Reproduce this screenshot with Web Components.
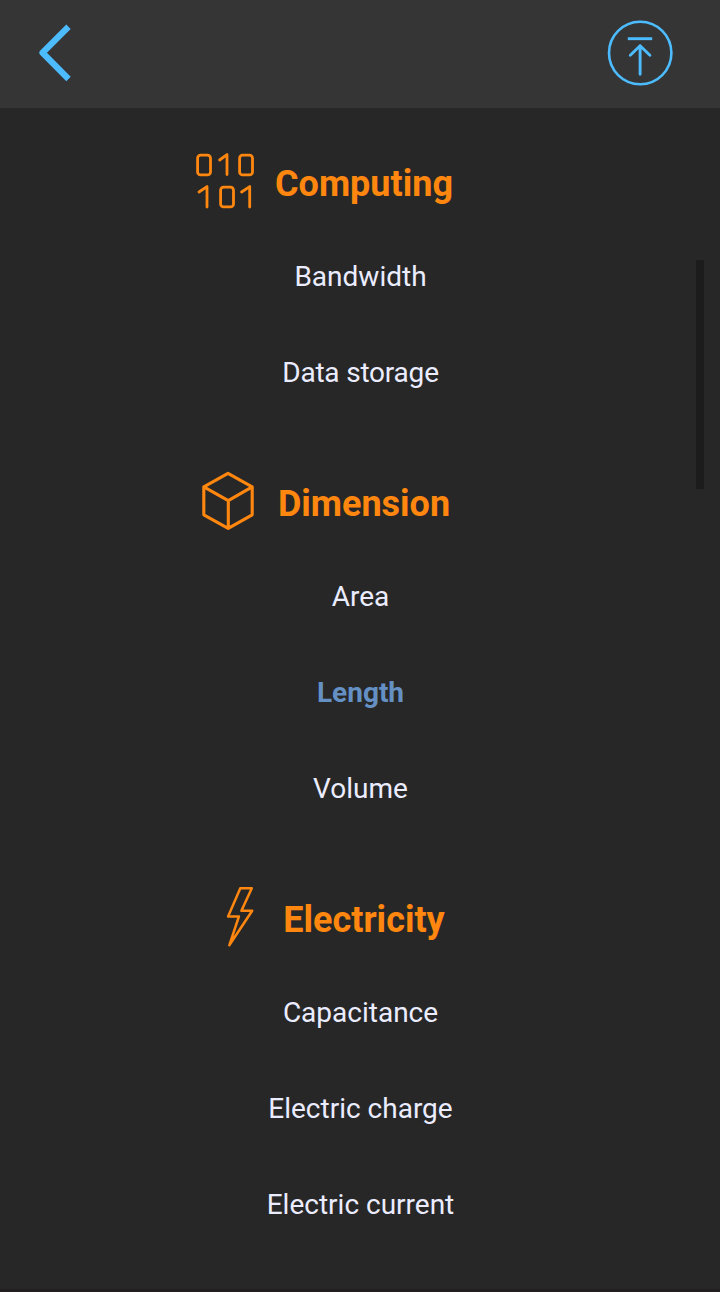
<!DOCTYPE html>
<html lang="en">
<head>
<meta charset="utf-8">
<title>Units</title>
<style>
html,body{margin:0;height:100%;background:#272727;overflow:hidden}
</style>
</head>
<body>
<unit-screen></unit-screen>
<script>
const define = (name, html) => {
  const t = document.createElement('template');
  t.innerHTML = html;
  customElements.define(name, class extends HTMLElement {
    constructor() {
      super();
      this.attachShadow({ mode: 'open' }).append(t.content.cloneNode(true));
    }
  });
};

const icons = {
  binary: '<g stroke-width="2.8"><rect x="5.6" y="7.2" width="12.9" height="19.7" rx="3"/><rect x="47.6" y="7.2" width="12.9" height="19.7" rx="3"/><rect x="28.6" y="39.2" width="12.9" height="19.7" rx="3"/><path d="M27.6 12 35 6.6V26.6M7 44 15 38.6V59M49.6 44 57.7 38.6V59"/></g>',
  cube: '<path stroke-width="3.1" d="M36 5.3 60.2 18.8V46.8L36.2 60.4 11.8 46.8V18.8ZM11.8 18.8 36.3 32.6 60.2 18.8M36.3 32.6V60.4"/>',
  bolt: '<path stroke-width="2.5" d="M48.3 4.2H59.8L49.4 26.8H60.2L37.3 61.3 46.9 32.5H36.1Z"/>'
};
customElements.define('category-icon', class extends HTMLElement {
  connectedCallback() {
    this.attachShadow({ mode: 'open' }).innerHTML =
      '<style>:host{display:block;width:64px;height:64px}svg{display:block}</style>' +
      '<svg width="64" height="64" fill="none" stroke="#ff870f" stroke-linecap="round" stroke-linejoin="round">' +
      icons[this.getAttribute('name')] + '</svg>';
  }
});

define('top-bar', `
<style>
:host{display:flex;justify-content:space-between;box-sizing:border-box;height:108px;flex:none;background:#353535}
svg{display:block}
</style>
<svg width="108" height="108" fill="none" stroke="#4dbcff"><path stroke-width="6.2" stroke-linejoin="round" d="M68.5 26.8 42.5 52.8 68.5 79"/></svg>
<svg width="160" height="108" fill="none" stroke="#4dbcff"><circle cx="80.2" cy="53" r="31.2" stroke-width="2.6"/><path stroke-width="2.9" stroke-linejoin="round" d="M67.8 38.7H92.2"/><path stroke-width="2.9" stroke-linecap="round" stroke-linejoin="round" d="M80.1 74.3V45.8M70.3 55.2 80.1 45.8 89.9 55.2"/></svg>`);

define('unit-item', `
<style>
:host{display:block;box-sizing:border-box;height:96px;padding:1px 0 0 1px;line-height:96px;text-align:center;font-size:28px;color:#ebedff}
:host([selected]){font-weight:700;color:#6590c4}
:host([tight]){letter-spacing:-.2px}
</style><slot></slot>`);

define('unit-category', `
<style>
:host{display:block;padding-top:32px}
header{display:grid;grid-template-columns:64px 216px;justify-content:start;padding-left:192px;height:96px;box-sizing:border-box;padding-top:16px}
h2{margin:0;text-align:center;font-size:36px;line-height:72px;font-weight:700;color:#ff870f}
</style>
<header><slot name="icon"></slot><h2><slot name="title"></slot></h2></header>
<slot></slot>`);

define('scroll-thumb', `
<style>:host{position:absolute;left:696px;top:152px;width:8px;height:229px;background:#1c1c1c}</style>`);

define('unit-list', `
<style>
:host{display:block;position:relative;flex:1;min-height:0;overflow:hidden}
.items{margin-top:-8px}
</style><div class="items"><slot></slot></div><scroll-thumb></scroll-thumb>`);

define('unit-screen', `
<style>
:host{display:flex;flex-direction:column;box-sizing:border-box;width:720px;height:1292px;background:#272727;border-bottom:3px solid #231f20;font-family:Roboto,sans-serif}
</style>
<top-bar></top-bar>
<unit-list>
<unit-category><category-icon slot="icon" name="binary"></category-icon><span slot="title">Computing</span>
<unit-item>Bandwidth</unit-item><unit-item tight>Data storage</unit-item></unit-category>
<unit-category><category-icon slot="icon" name="cube"></category-icon><span slot="title">Dimension</span>
<unit-item>Area</unit-item><unit-item selected>Length</unit-item><unit-item>Volume</unit-item></unit-category>
<unit-category><category-icon slot="icon" name="bolt"></category-icon><span slot="title">Electricity</span>
<unit-item>Capacitance</unit-item><unit-item>Electric charge</unit-item><unit-item>Electric current</unit-item></unit-category>
</unit-list>`);
</script>
</body>
</html>
